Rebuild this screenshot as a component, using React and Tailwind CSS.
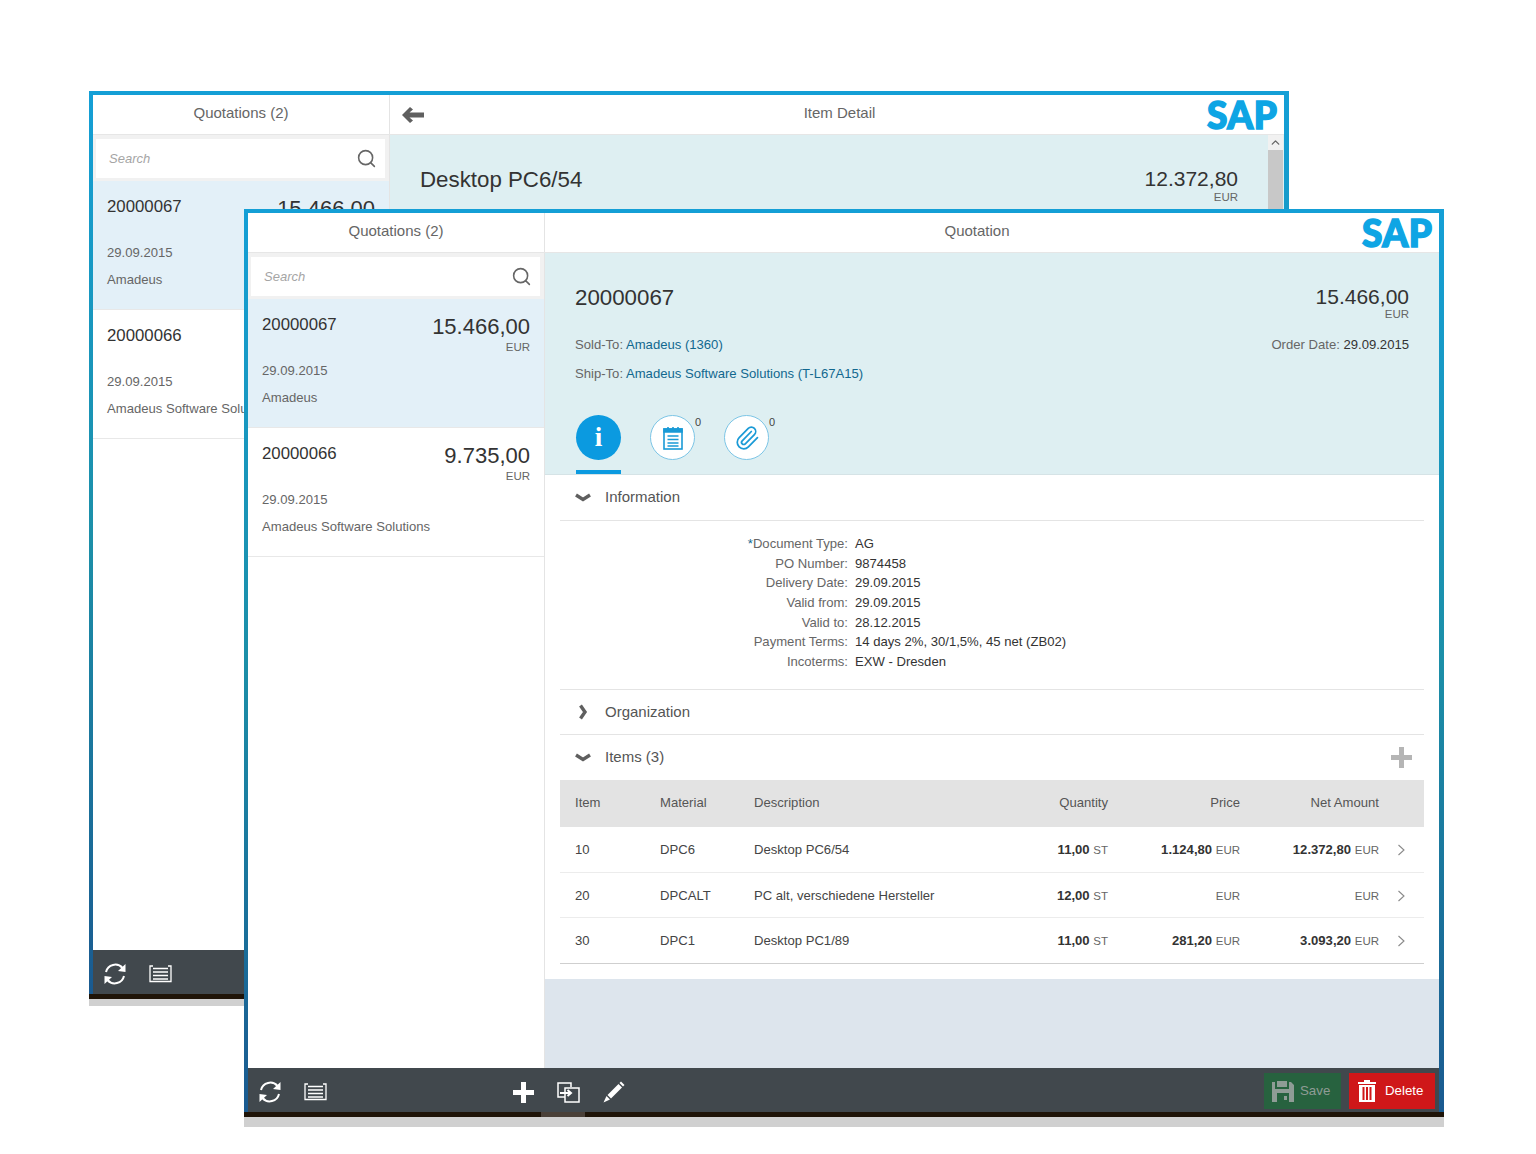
import React from "react";
import { Search, Paperclip, ChevronUp } from "lucide-react";

const quotations = [
  { id: "20000067", amount: "15.466,00", date: "29.09.2015", name: "Amadeus", selected: true },
  { id: "20000066", amount: "9.735,00", date: "29.09.2015", name: "Amadeus Software Solutions" },
];

const formRows = [
  ["Document Type:", "AG"],
  ["PO Number:", "9874458"],
  ["Delivery Date:", "29.09.2015"],
  ["Valid from:", "29.09.2015"],
  ["Valid to:", "28.12.2015"],
  ["Payment Terms:", "14 days 2%, 30/1,5%, 45 net (ZB02)"],
  ["Incoterms:", "EXW - Dresden"],
];

const items = [
  { item: "10", material: "DPC6", text: "Desktop PC6/54", qty: "11,00", price: "1.124,80", net: "12.372,80" },
  { item: "20", material: "DPCALT", text: "PC alt, verschiedene Hersteller", qty: "12,00", price: "", net: "" },
  { item: "30", material: "DPC1", text: "Desktop PC1/89", qty: "11,00", price: "281,20", net: "3.093,20" },
];

const tableCols = "grid grid-cols-[85px_94px_250px_104px_132px_139px_1fr] pl-[15px] items-center";

const SapLogo = () => (
  <div className="w-[78px] shrink-0 pl-[1px] text-left font-['Lato',sans-serif] text-[37px] leading-[40px] font-black tracking-[0.5px] text-[#0ea5e4] [-webkit-text-stroke:1.5px_#0ea5e4]">
    SAP
  </div>
);

const SyncIcon = () => (
  <svg width="24" height="24" viewBox="0 0 24 24" fill="none" stroke="white" strokeWidth="2">
    <path d="M3 10 A9.5 9.5 0 0 1 19.5 6" />
    <path d="M21 14 A9.5 9.5 0 0 1 4.5 18" />
    <path d="M22.5 2 L22.5 10 L15 9 Z" fill="white" stroke="none" />
    <path d="M1.5 22 L1.5 14 L9 15 Z" fill="white" stroke="none" />
  </svg>
);

const ListIcon = () => (
  <svg width="23" height="18" viewBox="0 0 23 18" fill="none" stroke="white" strokeWidth="1.3">
    <path d="M4 1 H1 V16.5 H4" />
    <path d="M19 1 H22 V16.5 H19" />
    <path d="M4 3.5 H19 M4 7 H19 M4 10.5 H19 M4 14 H19 M4 16.5 H19" />
  </svg>
);

const PlusIcon = ({ color = "white", size = 21 }) => (
  <svg width={size} height={size} viewBox="0 0 21 21" fill={color}>
    <rect x="8" y="0" width="5" height="21" />
    <rect x="0" y="8" width="21" height="5" />
  </svg>
);

const CopyIcon = () => (
  <svg width="23" height="21" viewBox="0 0 23 21" fill="none" stroke="white" strokeWidth="1.5">
    <path d="M14 5 V1 H1 V15 H8" />
    <rect x="8" y="6" width="14" height="14" />
    <path d="M3 11 H13 M10.5 8 L14 11 L10.5 14" strokeWidth="2" />
  </svg>
);

const PencilIcon = () => (
  <svg width="22" height="22" viewBox="0 0 22 22" fill="white">
    <path d="M4.5 14 L15.5 3 L19 6.5 L8 17.5 Z" />
    <path d="M16.5 2 L18 0.5 L21.5 4 L20 5.5 Z" />
    <path d="M3.5 15 L7 18.5 L0.5 21.5 Z" />
  </svg>
);

const SaveIcon = () => (
  <svg width="22" height="22" viewBox="0 0 22 22" fill="#8f9c96">
    <path d="M0 2 H3 V9 H17 V2 H19 L22 5 V22 H0 Z M5 13 V22 H17 V13 Z" fillRule="evenodd" />
    <rect x="5" y="1" width="10" height="6" />
    <rect x="12" y="16" width="3" height="4" />
  </svg>
);

const TrashIcon = () => (
  <svg width="18" height="22" viewBox="0 0 18 22" fill="white">
    <rect x="0" y="2" width="18" height="2" />
    <rect x="6" y="0" width="6" height="2" />
    <path d="M1 5 H17 V22 H1 Z M4.5 7 V20 H6.5 V7 Z M8 7 V20 H10 V7 Z M11.5 7 V20 H13.5 V7 Z" fillRule="evenodd" />
  </svg>
);

const NotesIcon = () => (
  <svg width="20" height="24" viewBox="0 0 20 24" fill="none" stroke="#1a9ad6" strokeWidth="1.6">
    <rect x="1" y="3" width="18" height="20" />
    <path d="M1 3 H19 V6 H1 Z" fill="#1a9ad6" />
    <path d="M5 1 V4 M10 1 V4 M15 1 V4" />
    <path d="M4.5 10 H15.5 M4.5 13.5 H15.5 M4.5 17 H15.5 M4.5 20 H15.5" strokeWidth="1.3" />
  </svg>
);

const Chevron = ({ open }) => (
  <svg width="16" height="16" viewBox="0 0 16 16" fill="none" stroke="#5f5f5f" strokeWidth="3.4">
    {open ? <path d="M1 5 L8 9.5 L15 5" /> : <path d="M5.5 1.5 L10 8 L5.5 14.5" />}
  </svg>
);

const MasterList = () => (
  <div className="w-[297px] shrink-0 h-full flex flex-col border-r border-[#e4e4e4] bg-white">
    <div className="bg-[#f1f1f1] pt-[4px] pb-[3px] pl-[3px] pr-[4px]">
      <div className="h-[39px] bg-white flex items-center justify-between pl-[13px] pr-[8px]">
        <span className="italic text-[13px] text-[#a5a5a5]">Search</span>
        <Search size={21} strokeWidth={1.8} className="text-[#666666]" />
      </div>
    </div>
    {quotations.map((q) => (
      <div
        key={q.id}
        className={`h-[129px] px-[14px] pt-[16px] border-b border-[#e8e8e8] ${q.selected ? "bg-[#e3f0f8]" : "bg-white"}`}
      >
        <div className="flex justify-between">
          <span className="text-[16.8px] leading-[20px] text-[#333333]">{q.id}</span>
          <div className="text-right -mt-px">
            <div className="text-[22px] leading-[26px] text-[#333333]">{q.amount}</div>
            <div className="text-[11.5px] leading-[14px] text-[#666666]">EUR</div>
          </div>
        </div>
        <div className="mt-[8px] text-[13.1px] leading-[17px] text-[#666666]">{q.date}</div>
        <div className="mt-[10px] text-[13.1px] leading-[17px] text-[#666666] whitespace-nowrap">{q.name}</div>
      </div>
    ))}
  </div>
);

const Footer = ({ children }) => (
  <div className="h-[44px] shrink-0 bg-[#41484d] flex items-center pt-[4px] pl-[10px] pr-[4px]">
    <div className="w-[24px] flex justify-center"><SyncIcon /></div>
    <div className="ml-[21px] w-[24px] flex justify-center"><ListIcon /></div>
    {children}
  </div>
);

const Window = ({ className, left, title, logoSpacer, body, footer, bar }) => (
  <div className={`absolute w-[1200px] flex flex-col ${className}`}>
    <div className="flex-1 min-h-0 flex flex-col pl-[4px] pr-[5px] pt-[4px] bg-gradient-to-b from-[#149fd6] via-[#1c8fa8] to-[#1a5a90]">
      <div className="h-[40px] shrink-0 flex bg-white border-b border-[#e6e6e6]">
        <div className="w-[297px] shrink-0 border-r border-[#e4e4e4] flex items-center justify-center pb-[2px] text-[15px] text-[#666666]">
          Quotations (2)
        </div>
        <div className="flex-1 flex items-center">
          <div className={`${logoSpacer} shrink-0 flex items-center pl-[12px]`}>{left}</div>
          <div className="flex-1 text-center pb-[2px] text-[15px] text-[#666666]">{title}</div>
          <SapLogo />
        </div>
      </div>
      <div className="flex-1 min-h-0 flex overflow-hidden">{body}</div>
      {footer}
    </div>
    {bar}
  </div>
);

const BottomBar = ({ height, segment }) => (
  <>
    <div className="h-[5px] shrink-0 bg-[#1f1408]">
      {segment && <div className="ml-[297px] w-[44px] h-full bg-[#4a4038]" />}
    </div>
    <div className={`${height} shrink-0 bg-[#d0d0d0]`} />
  </>
);

const ItemDetail = () => (
  <div className="flex-1 bg-[#deeff2] flex">
    <div className="flex-1 pl-[30px] pr-[30px] pt-[30px]">
      <div className="flex justify-between">
        <span className="text-[22.3px] leading-[30px] text-[#333333]">Desktop PC6/54</span>
        <div className="text-right">
          <div className="text-[21px] leading-[28px] text-[#333333]">12.372,80</div>
          <div className="text-[11.5px] leading-[10px] -mt-px text-[#666666]">EUR</div>
        </div>
      </div>
    </div>
    <div className="w-[15px] mr-[1px] bg-[#f1f1f1]">
      <div className="h-[15px] flex justify-center items-center">
        <ChevronUp size={13} strokeWidth={2.5} className="text-[#666666]" />
      </div>
      <div className="h-full bg-[#c8c8c8]" />
    </div>
  </div>
);

const Quotation = () => (
  <div className="flex-1 flex flex-col bg-[#dde5ed]">
    <div className="h-[222px] shrink-0 bg-[#deeff2] border-b border-[#d5e3e6] pl-[30px] pr-[30px] pt-[30px]">
      <div className="flex justify-between h-[38px]">
        <span className="text-[22.3px] leading-[30px] text-[#333333]">20000067</span>
        <div className="text-right">
          <div className="text-[21px] leading-[28px] text-[#333333]">15.466,00</div>
          <div className="text-[11.5px] leading-[10px] -mt-[2px] text-[#666666]">EUR</div>
        </div>
      </div>
      <div className="mt-[14px] flex justify-between text-[13.1px] leading-[20px] text-[#666666]">
        <span>Sold-To: <span className="text-[#11688f]">Amadeus (1360)</span></span>
        <span>Order Date: <span className="text-[#333333]">29.09.2015</span></span>
      </div>
      <div className="mt-[9px] text-[13.1px] leading-[20px] text-[#666666]">
        Ship-To: <span className="text-[#11688f]">Amadeus Software Solutions (T-L67A15)</span>
      </div>
      <div className="mt-[31px] ml-px flex gap-[29px] relative">
        <div className="w-[45px] h-[59px] border-b-4 border-[#0b9ae0]">
          <div className="w-[45px] h-[45px] rounded-full bg-[#0b9ae0] flex items-center justify-center font-['Liberation_Serif',serif] font-bold text-[27px] text-white">
            i
          </div>
        </div>
        <div className="relative w-[45px] h-[45px] rounded-full bg-white border border-[#7cc5e6] flex items-center justify-center">
          <NotesIcon />
          <span className="absolute -right-[7px] -top-[1px] text-[11px] leading-[14px] text-[#444444]">0</span>
        </div>
        <div className="relative w-[45px] h-[45px] rounded-full bg-white border border-[#7cc5e6] flex items-center justify-center">
          <Paperclip size={26} strokeWidth={1.6} className="text-[#1a9ad6]" />
          <span className="absolute -right-[7px] -top-[1px] text-[11px] leading-[14px] text-[#444444]">0</span>
        </div>
      </div>
    </div>

    <div className="shrink-0 bg-white px-[15px] pb-[15px]">
      <div className="h-[46px] flex items-center pl-[15px] gap-[14px] border-b border-[#e4e4e4] text-[15px] text-[#555555]">
        <Chevron open /> Information
      </div>
      <div className="h-[169px] pt-[13px] border-b border-[#e4e4e4]">
        {formRows.map(([label, value], i) => (
          <div key={label} className="h-[19.7px] flex text-[13.1px] leading-[19.7px]">
            <div className="w-[288px] text-right text-[#666666]">
              {i === 0 && <span className="text-[#11688f]">*</span>}
              {label}
            </div>
            <div className="ml-[7px] text-[#333333]">{value}</div>
          </div>
        ))}
      </div>
      <div className="h-[45px] flex items-center pl-[15px] gap-[14px] border-b border-[#e4e4e4] text-[15px] text-[#555555]">
        <Chevron /> Organization
      </div>
      <div className="h-[45px] flex items-center pl-[15px] pr-[12px] gap-[14px] text-[15px] text-[#555555]">
        <Chevron open /> Items (3)
        <div className="ml-auto"><PlusIcon color="#b5b5b5" /></div>
      </div>
      <div className={`${tableCols} h-[47px] pb-[2px] bg-[#e3e3e3] text-[13.1px] text-[#555555]`}>
        <span>Item</span>
        <span>Material</span>
        <span>Description</span>
        <span className="text-right">Quantity</span>
        <span className="text-right">Price</span>
        <span className="text-right">Net Amount</span>
      </div>
      {items.map((row, i) => (
        <div
          key={row.item}
          className={`${tableCols} h-[45.7px] pt-px border-b text-[13.1px] text-[#444444] ${i === 2 ? "border-[#cfcfcf]" : "border-[#ececec]"}`}
        >
          <span>{row.item}</span>
          <span>{row.material}</span>
          <span>{row.text}</span>
          <span className="text-right"><b className="text-[#333333]">{row.qty}</b> <span className="text-[11.5px] text-[#666666]">ST</span></span>
          <span className="text-right"><b className="text-[#333333]">{row.price}</b> <span className="text-[11.5px] text-[#666666]">EUR</span></span>
          <span className="text-right"><b className="text-[#333333]">{row.net}</b> <span className="text-[11.5px] text-[#666666]">EUR</span></span>
          <div className="pl-[18px]">
            <svg width="9" height="12" viewBox="0 0 9 12" fill="none" stroke="#8a8a8a" strokeWidth="1.1">
              <path d="M1.5 1 L7 6 L1.5 11" />
            </svg>
          </div>
        </div>
      ))}
    </div>
  </div>
);

export default function App() {
  return (
    <div className="relative w-[1536px] h-[1154px] bg-white overflow-hidden font-['Liberation_Sans',Arial,sans-serif]">
      <Window
        className="left-[89px] top-[91px] h-[915px]"
        title="Item Detail"
        logoSpacer="w-[83px]"
        left={
          <svg width="22" height="16" viewBox="0 0 22 16" fill="#5f5f5f">
            <path d="M0 8 L8 0 L11 2.5 L7.5 5.5 H22 V10.5 H7.5 L11 13.5 L8 16 Z" />
          </svg>
        }
        body={
          <>
            <MasterList />
            <ItemDetail />
          </>
        }
        footer={<Footer />}
        bar={<BottomBar height="h-[7px]" />}
      />
      <Window
        className="left-[244px] top-[209px] h-[918px]"
        title="Quotation"
        logoSpacer="w-[48px]"
        body={
          <>
            <MasterList />
            <Quotation />
          </>
        }
        footer={
          <Footer>
            <div className="ml-[186px] flex items-center gap-[23px]">
              <PlusIcon />
              <CopyIcon />
              <PencilIcon />
            </div>
            <div className="ml-auto -mt-[2px] flex gap-[8px]">
              <div className="w-[77px] h-[36px] bg-[#27623f] flex items-center pl-[8px] gap-[6px] text-[13.3px] text-[#8f9c96]">
                <SaveIcon /> Save
              </div>
              <div className="w-[86px] h-[36px] bg-[#cf1719] flex items-center pl-[9px] gap-[9px] text-[13.3px] text-white">
                <TrashIcon /> Delete
              </div>
            </div>
          </Footer>
        }
        bar={<BottomBar height="h-[10px]" segment />}
      />
    </div>
  );
}
